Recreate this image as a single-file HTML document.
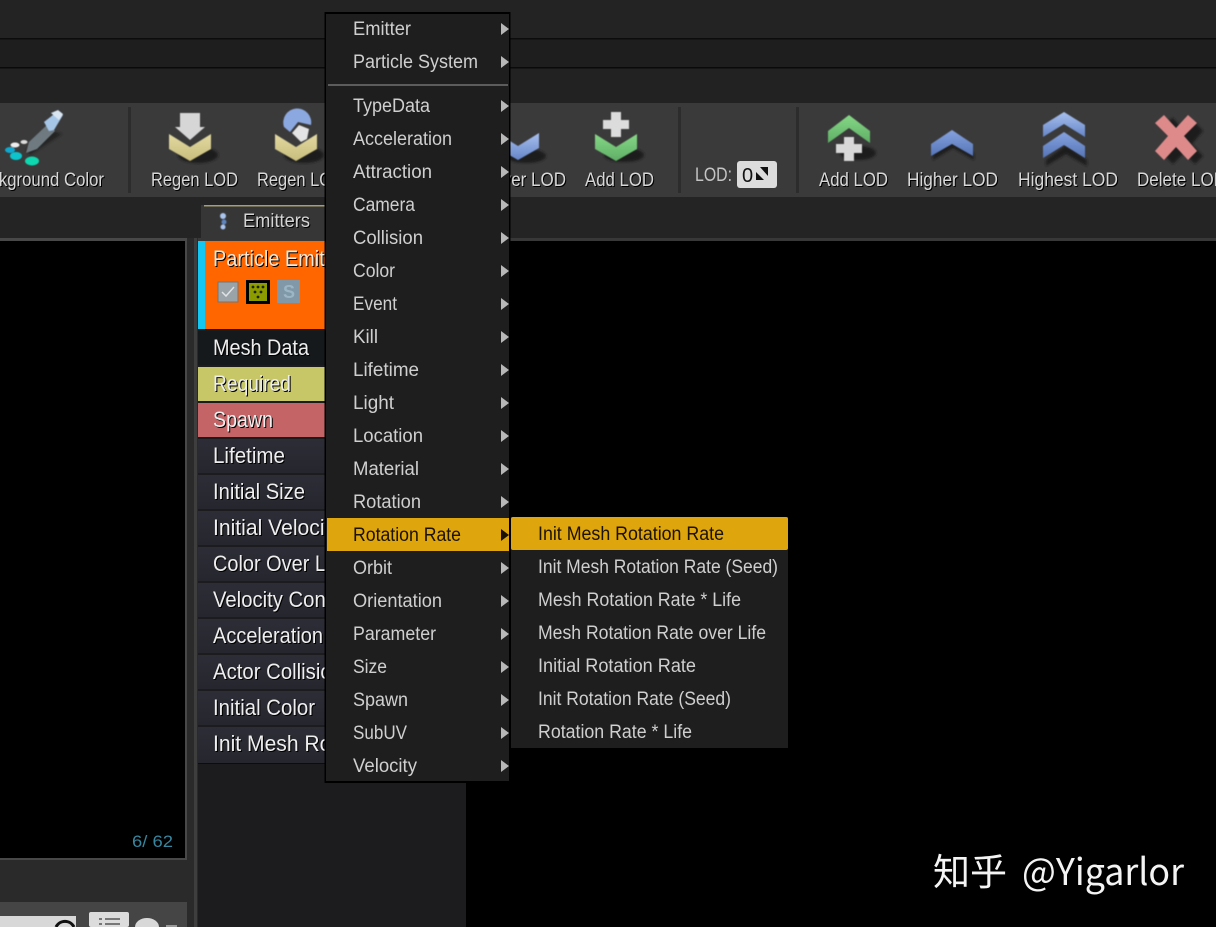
<!DOCTYPE html>
<html><head><meta charset="utf-8"><style>
html,body{margin:0;padding:0;background:#000;width:1216px;height:927px;overflow:hidden}
svg{display:block}
text{font-family:"Liberation Sans","Noto Sans CJK SC",sans-serif}
.s text,text.s{filter:drop-shadow(1px 1px 0 #000)}
.tb text{font-size:19px;fill:#d8d8d8}
.li text{font-size:22px;fill:#eee}
.m text{font-size:19px;fill:#cfcfcf}
</style></head><body>
<svg width="1216" height="927" viewBox="0 0 1216 927" xmlns="http://www.w3.org/2000/svg">
<defs>
<linearGradient id="tan" x1="0" y1="0" x2="0" y2="1"><stop offset="0" stop-color="#e2d9a2"/><stop offset="1" stop-color="#c8bd7c"/></linearGradient>
<linearGradient id="gr" x1="0" y1="0" x2="0" y2="1"><stop offset="0" stop-color="#86d886"/><stop offset="1" stop-color="#5fae66"/></linearGradient>
<linearGradient id="bl" x1="0" y1="0" x2="0" y2="1"><stop offset="0" stop-color="#a8c0ee"/><stop offset="1" stop-color="#6585c8"/></linearGradient>
<linearGradient id="bl2" x1="0" y1="0" x2="0" y2="1"><stop offset="0" stop-color="#86a2de"/><stop offset="1" stop-color="#5575b8"/></linearGradient>
<linearGradient id="row" x1="0" y1="0" x2="0" y2="1"><stop offset="0" stop-color="#2d2d37"/><stop offset="1" stop-color="#26262e"/></linearGradient>
<filter id="blur"><feGaussianBlur stdDeviation="1.200"/></filter>
<filter id="soft"><feGaussianBlur stdDeviation="0.600"/></filter>
<clipPath id="listclip"><rect x="198" y="205" width="127" height="570"/></clipPath>
</defs>

<!-- background bands -->
<rect width="1216" height="927" fill="#000"/>
<rect width="1216" height="38" fill="#232323"/>
<rect y="38" width="1216" height="1.500" fill="#0c0c0c"/>
<rect y="39.500" width="1216" height="27.500" fill="#1e1e1e"/>
<rect y="67" width="1216" height="1.500" fill="#0a0a0a"/>
<rect y="68.500" width="1216" height="34.500" fill="#222"/>
<rect y="103" width="1216" height="94" fill="#3a3a3a"/>
<rect y="197" width="1216" height="41" fill="#242424"/>
<rect y="238" width="1216" height="3" fill="#383838"/>
<rect x="128" y="107" width="3" height="86" fill="#2c2c2c"/>
<rect x="678" y="107" width="3" height="86" fill="#2c2c2c"/>
<rect x="796" y="107" width="3" height="86" fill="#2c2c2c"/>

<!-- left viewport -->
<rect x="0" y="238" width="198" height="689" fill="#2a2a2a"/>
<rect x="0" y="238" width="187" height="622" fill="#484848"/>
<rect x="0" y="241" width="185" height="617" fill="#000"/>
<text x="132" y="847" font-size="17" fill="#37859f" textLength="41" lengthAdjust="spacingAndGlyphs">6/  62</text>
<rect x="194" y="238" width="3" height="689" fill="#3e3e3e"/>
<rect x="0" y="902" width="187" height="25" fill="#454545"/>
<rect x="0" y="916" width="76" height="11" fill="#d8d8d8"/>
<path d="M56 927a10 10 0 0 1 18 0" fill="none" stroke="#111" stroke-width="3"/>
<rect x="89" y="912" width="40" height="15" rx="2" fill="#dcdcdc"/>
<path d="M99 919h3M105 919h15M99 924h3M105 924h15" stroke="#777" stroke-width="2"/>
<path d="M135 927a12 9 0 0 1 24 0z" fill="#d8d8d8"/>
<rect x="166" y="925" width="11" height="2" fill="#999"/>

<!-- emitter panel -->
<rect x="198" y="241" width="268" height="686" fill="#1c1c1f"/>
<rect x="201" y="205" width="130" height="35" fill="#363636"/>
<rect x="204" y="205" width="125" height="1.500" fill="#a59f72"/>
<g filter="url(#soft)"><circle cx="223" cy="216" r="3" fill="#a9c4ee"/><circle cx="224" cy="222" r="2.500" fill="#5f85c0"/><circle cx="223" cy="227" r="2.500" fill="#a9c4ee"/></g>
<text class="s" x="243" y="227" font-size="19" fill="#d5d5d5" textLength="67" lengthAdjust="spacingAndGlyphs">Emitters</text>

<g clip-path="url(#listclip)">
<rect x="198" y="241" width="130" height="88" fill="#ff6600"/>
<rect x="198" y="241" width="7" height="88" fill="#14c6f2"/>
<text class="s" x="213" y="266" font-size="22" fill="#f5e8dc" textLength="135" lengthAdjust="spacingAndGlyphs">Particle Emitter</text>
<rect x="218" y="282" width="20" height="20" fill="#9aa3a8" stroke="#77736e"/>
<path d="M222 292l4 4 8-9" fill="none" stroke="#dfe3e5" stroke-width="1.500"/>
<rect x="246" y="280" width="24" height="24" fill="#000"/>
<rect x="249" y="283" width="18" height="18" fill="#8c9c00"/>
<g fill="#1d2400"><circle cx="253" cy="287" r="1.400"/><circle cx="258" cy="287" r="1.400"/><circle cx="263" cy="287" r="1.400"/><circle cx="255" cy="292" r="1.400"/><circle cx="261" cy="292" r="1.400"/><circle cx="258" cy="297" r="1.400"/></g>
<rect x="277" y="280" width="23" height="23" fill="#8098a8"/>
<text x="283" y="298" font-size="18" font-weight="bold" fill="#9cb6c6">S</text>

<rect x="198" y="331" width="130" height="34" fill="#15191c"/>
<rect x="198" y="367" width="130" height="34" fill="#c7c768"/>
<rect x="198" y="403" width="130" height="34" fill="#c46466"/>
<rect x="198" y="439" width="130" height="34" fill="url(#row)"/>
<rect x="198" y="475" width="130" height="34" fill="url(#row)"/>
<rect x="198" y="511" width="130" height="34" fill="url(#row)"/>
<rect x="198" y="547" width="130" height="34" fill="url(#row)"/>
<rect x="198" y="583" width="130" height="34" fill="url(#row)"/>
<rect x="198" y="619" width="130" height="34" fill="url(#row)"/>
<rect x="198" y="655" width="130" height="34" fill="url(#row)"/>
<rect x="198" y="691" width="130" height="34" fill="url(#row)"/>
<rect x="198" y="727" width="130" height="36" fill="url(#row)"/>
<rect x="198" y="763" width="130" height="1" fill="#0c0c0c"/>
<g class="li s">
<text x="213" y="355" textLength="96" lengthAdjust="spacingAndGlyphs">Mesh Data</text>
<text x="213" y="391" textLength="78" lengthAdjust="spacingAndGlyphs">Required</text>
<text x="213" y="427" textLength="60" lengthAdjust="spacingAndGlyphs">Spawn</text>
<text x="213" y="463" textLength="72" lengthAdjust="spacingAndGlyphs">Lifetime</text>
<text x="213" y="499" textLength="92" lengthAdjust="spacingAndGlyphs">Initial Size</text>
<text x="213" y="535" textLength="128" lengthAdjust="spacingAndGlyphs">Initial Velocity</text>
<text x="213" y="571" textLength="134" lengthAdjust="spacingAndGlyphs">Color Over Life</text>
<text x="213" y="607" textLength="124" lengthAdjust="spacingAndGlyphs">Velocity Cone</text>
<text x="213" y="643" textLength="110" lengthAdjust="spacingAndGlyphs">Acceleration</text>
<text x="213" y="679" textLength="130" lengthAdjust="spacingAndGlyphs">Actor Collision</text>
<text x="213" y="715" textLength="102" lengthAdjust="spacingAndGlyphs">Initial Color</text>
<text x="213" y="751" textLength="170" lengthAdjust="spacingAndGlyphs">Init Mesh Rotation</text>
</g>
</g>

<!-- toolbar icons -->
<path d="M30 155L62 134 50 130 26 150z" fill="#1c1c1c" opacity=".75" filter="url(#blur)"/>
<g filter="url(#soft)">
<path d="M26 153l3-11 19-18 7 7-18 18z" fill="#6e7a80"/>
<path d="M44 122l14-11 5 4-9 15-5 1z" fill="#a6c6e8"/>
<path d="M51 113l7-3 5 4-4 6z" fill="#d9e6f2"/>
<ellipse cx="15" cy="145" rx="4.500" ry="2.500" fill="#eee"/>
<ellipse cx="24" cy="142" rx="3.500" ry="2" fill="#ddd"/>
<ellipse cx="10" cy="150" rx="5" ry="3" fill="#11a8d0"/>
<ellipse cx="16" cy="156" rx="6" ry="4" fill="#10c4cc"/>
<ellipse cx="32" cy="161" rx="7" ry="4.500" fill="#10d8b0"/>
</g>

<ellipse cx="198" cy="155" rx="20" ry="8" fill="#1a1a1a" filter="url(#blur)"/>
<ellipse cx="304" cy="155" rx="20" ry="8" fill="#1a1a1a" filter="url(#blur)"/>
<ellipse cx="526" cy="156" rx="20" ry="7" fill="#1a1a1a" filter="url(#blur)"/>
<ellipse cx="624" cy="155" rx="20" ry="7" fill="#1a1a1a" filter="url(#blur)"/>
<ellipse cx="858" cy="153" rx="18" ry="7" fill="#1a1a1a" filter="url(#blur)"/>
<path d="M933 154l20-15 21 15v6l-21-12-20 12z" fill="#1a1a1a" filter="url(#blur)"/>
<path d="M1046 160l20-15 21 15v6l-21-12-20 12z" fill="#1a1a1a" filter="url(#blur)"/>
<path d="M1160 121l10-6 11 13 11-9 8 9-11 13 11 12-8 8-11-11-11 11-8-8 11-12z" fill="#1c1c1c" filter="url(#blur)" transform="translate(3,3)"/>
<g filter="url(#soft)">
<path d="M180 113h20v14h5l-15 13-15-13h5z" fill="#d6d6d6"/>
<path d="M169 134l21 13 21-13v15l-21 12-21-12z" fill="url(#tan)"/>
<path d="M284 127a14 14 0 1 1 27-2l-13-3-8 10z" fill="#8ca8e0"/>
<path d="M292 133l7-8 10 4-2 10-6 3z" fill="#e4e4e4"/>
<path d="M275 134l21 13 21-13v15l-21 12-21-12z" fill="url(#tan)"/>
<path d="M497 133l21 13 21-13v15l-21 12-21-12z" fill="url(#bl)"/>
<path d="M611 112h10v8h8v9h-8v8h-10v-8h-8v-9h8z" fill="#dcdcdc"/>
<path d="M595 134l21 13 21-13v15l-21 12-21-12z" fill="url(#gr)"/>
<path d="M828 131l21-16 21 16v12l-21-15-21 15z" fill="url(#gr)"/>
<path d="M844 137h10v7h8v9h-8v8h-10v-8h-8v-9h8z" fill="#d8d8d8"/>
<path d="M931 144l21-14 21 14v12l-21-12-21 12z" fill="url(#bl2)"/>
<path d="M1043 125l21-13 21 13v12l-21-13-21 13z" fill="url(#bl)"/>
<path d="M1043 146l21-14 21 14v12l-21-13-21 13z" fill="url(#bl2)"/>
<path d="M1155 123l9-8 12 13 12-13 9 8-13 13 13 15-9 9-12-13-12 13-9-9 13-15z" fill="#de8a8a"/>
</g>

<g class="tb s">
<text x="-30" y="186" textLength="134" lengthAdjust="spacingAndGlyphs">Background Color</text>
<text x="151" y="186" textLength="87" lengthAdjust="spacingAndGlyphs">Regen LOD</text>
<text x="257" y="186" textLength="87" lengthAdjust="spacingAndGlyphs">Regen LOD</text>
<text x="480" y="186" textLength="86" lengthAdjust="spacingAndGlyphs">Lower LOD</text>
<text x="585" y="186" textLength="69" lengthAdjust="spacingAndGlyphs">Add LOD</text>
<text x="819" y="186" textLength="69" lengthAdjust="spacingAndGlyphs">Add LOD</text>
<text x="907" y="186" textLength="91" lengthAdjust="spacingAndGlyphs">Higher LOD</text>
<text x="1018" y="186" textLength="100" lengthAdjust="spacingAndGlyphs">Highest LOD</text>
<text x="1137" y="186" textLength="89" lengthAdjust="spacingAndGlyphs">Delete LOD</text>
</g>
<text x="695" y="181" font-size="19" fill="#c4c4c4" textLength="37" lengthAdjust="spacingAndGlyphs">LOD:</text>
<rect x="737" y="161" width="40" height="27" rx="3" fill="#dcdcdc"/>
<text x="742" y="182" font-size="20" fill="#111">0</text>
<path d="M760 167h8v9zM756 172l8 8h-8z" fill="#111"/>

<!-- main menu -->
<rect x="324.500" y="12" width="186" height="771" fill="#000"/>
<rect x="326" y="14" width="183" height="767" fill="#1e1e1e"/>
<rect x="328" y="84" width="180" height="2" fill="#5c5c5c"/>
<rect x="327" y="518" width="182" height="33" fill="#dea50c"/>
<g class="m">
<text x="353" y="35" textLength="58" lengthAdjust="spacingAndGlyphs">Emitter</text>
<text x="353" y="68" textLength="125" lengthAdjust="spacingAndGlyphs">Particle System</text>
<text x="353" y="112" textLength="77" lengthAdjust="spacingAndGlyphs">TypeData</text>
<text x="353" y="145" textLength="99" lengthAdjust="spacingAndGlyphs">Acceleration</text>
<text x="353" y="178" textLength="79" lengthAdjust="spacingAndGlyphs">Attraction</text>
<text x="353" y="211" textLength="62" lengthAdjust="spacingAndGlyphs">Camera</text>
<text x="353" y="244" textLength="70" lengthAdjust="spacingAndGlyphs">Collision</text>
<text x="353" y="277" textLength="42" lengthAdjust="spacingAndGlyphs">Color</text>
<text x="353" y="310" textLength="44" lengthAdjust="spacingAndGlyphs">Event</text>
<text x="353" y="343" textLength="25" lengthAdjust="spacingAndGlyphs">Kill</text>
<text x="353" y="376" textLength="66" lengthAdjust="spacingAndGlyphs">Lifetime</text>
<text x="353" y="409" textLength="41" lengthAdjust="spacingAndGlyphs">Light</text>
<text x="353" y="442" textLength="70" lengthAdjust="spacingAndGlyphs">Location</text>
<text x="353" y="475" textLength="66" lengthAdjust="spacingAndGlyphs">Material</text>
<text x="353" y="508" textLength="68" lengthAdjust="spacingAndGlyphs">Rotation</text>
<text x="353" y="541" textLength="108" lengthAdjust="spacingAndGlyphs" style="fill:#1b1200">Rotation Rate</text>
<text x="353" y="574" textLength="39" lengthAdjust="spacingAndGlyphs">Orbit</text>
<text x="353" y="607" textLength="89" lengthAdjust="spacingAndGlyphs">Orientation</text>
<text x="353" y="640" textLength="83" lengthAdjust="spacingAndGlyphs">Parameter</text>
<text x="353" y="673" textLength="34" lengthAdjust="spacingAndGlyphs">Size</text>
<text x="353" y="706" textLength="55" lengthAdjust="spacingAndGlyphs">Spawn</text>
<text x="353" y="739" textLength="54" lengthAdjust="spacingAndGlyphs">SubUV</text>
<text x="353" y="772" textLength="64" lengthAdjust="spacingAndGlyphs">Velocity</text>
</g>
<g fill="#b8b8b8">
<path d="M501 23l8 6-8 6z"/><path d="M501 56l8 6-8 6z"/><path d="M501 100l8 6-8 6z"/><path d="M501 133l8 6-8 6z"/><path d="M501 166l8 6-8 6z"/><path d="M501 199l8 6-8 6z"/><path d="M501 232l8 6-8 6z"/><path d="M501 265l8 6-8 6z"/><path d="M501 298l8 6-8 6z"/><path d="M501 331l8 6-8 6z"/><path d="M501 364l8 6-8 6z"/><path d="M501 397l8 6-8 6z"/><path d="M501 430l8 6-8 6z"/><path d="M501 463l8 6-8 6z"/><path d="M501 496l8 6-8 6z"/><path d="M501 529l8 6-8 6z" fill="#1b1200"/><path d="M501 562l8 6-8 6z"/><path d="M501 595l8 6-8 6z"/><path d="M501 628l8 6-8 6z"/><path d="M501 661l8 6-8 6z"/><path d="M501 694l8 6-8 6z"/><path d="M501 727l8 6-8 6z"/><path d="M501 760l8 6-8 6z"/>
</g>

<!-- sub menu -->
<rect x="510" y="516" width="279" height="233" fill="#000"/>
<rect x="511" y="517" width="277" height="231" fill="#1e1e1e"/>
<rect x="511" y="517" width="277" height="33" rx="2" fill="#dea50c"/>
<g class="m">
<text x="538" y="540" textLength="186" lengthAdjust="spacingAndGlyphs" style="fill:#1b1200">Init Mesh Rotation Rate</text>
<text x="538" y="573" textLength="240" lengthAdjust="spacingAndGlyphs">Init Mesh Rotation Rate (Seed)</text>
<text x="538" y="606" textLength="203" lengthAdjust="spacingAndGlyphs">Mesh Rotation Rate * Life</text>
<text x="538" y="639" textLength="228" lengthAdjust="spacingAndGlyphs">Mesh Rotation Rate over Life</text>
<text x="538" y="672" textLength="158" lengthAdjust="spacingAndGlyphs">Initial Rotation Rate</text>
<text x="538" y="705" textLength="193" lengthAdjust="spacingAndGlyphs">Init Rotation Rate (Seed)</text>
<text x="538" y="738" textLength="154" lengthAdjust="spacingAndGlyphs">Rotation Rate * Life</text>
</g>

<!-- watermark -->
<text x="933" y="885" font-size="37" fill="#f4f4f4" style="font-family:'Noto Sans CJK SC',sans-serif">知乎</text>
<text x="1022" y="885" font-size="37" fill="#f4f4f4" textLength="162" lengthAdjust="spacingAndGlyphs" style="font-family:'Noto Sans CJK SC',sans-serif">@Yigarlor</text>
</svg>
</body></html>
